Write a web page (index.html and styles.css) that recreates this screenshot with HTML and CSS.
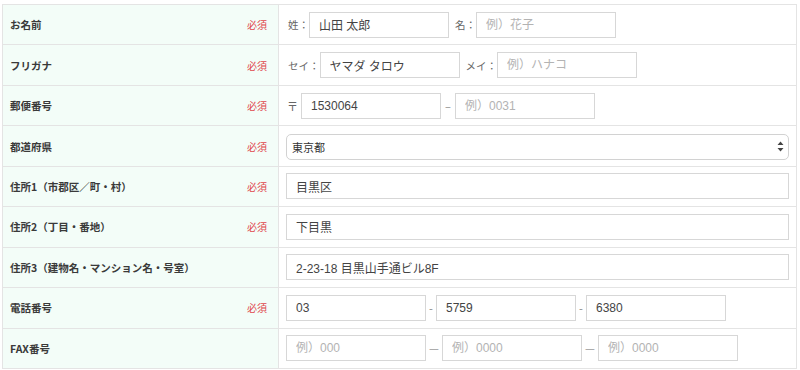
FILE: index.html
```html
<!DOCTYPE html>
<html lang="ja">
<head>
  <meta charset="UTF-8" />
  <title>お客様情報</title>
  <link rel="stylesheet" href="styles.css">
</head>
<body>

  <!-- お客様情報フォーム -->
  <div class="form-table">

    <div class="row">
      <div class="label">お名前<span class="req">必須</span></div>
      <div class="field">
        <span class="pre">姓：</span>
        <input type="text" class="box" value="山田 太郎">
        <span class="pre gap">名：</span>
        <input type="text" class="box" placeholder="例）花子">
      </div>
    </div>

    <div class="row">
      <div class="label">フリガナ<span class="req">必須</span></div>
      <div class="field">
        <span class="pre">セイ：</span>
        <input type="text" class="box" value="ヤマダ タロウ">
        <span class="pre gap">メイ：</span>
        <input type="text" class="box" placeholder="例）ハナコ">
      </div>
    </div>

    <div class="row">
      <div class="label">郵便番号<span class="req">必須</span></div>
      <div class="field">
        <span class="pre zip">〒</span>
        <input type="text" class="box" value="1530064">
        <span class="sep wide">–</span>
        <input type="text" class="box" placeholder="例）0031">
      </div>
    </div>

    <div class="row">
      <div class="label">都道府県<span class="req">必須</span></div>
      <div class="field">
        <div class="select-wrap">
          <select class="select">
            <option>東京都</option>
          </select>
          <svg class="arrows" width="7" height="11" viewBox="0 0 7 11">
            <path d="M3.5 0.5 L6.5 4 L0.5 4 Z M3.5 10.5 L6.5 7 L0.5 7 Z" fill="#444"/>
          </svg>
        </div>
      </div>
    </div>

    <div class="row">
      <div class="label">住所1（市郡区／町・村）<span class="req">必須</span></div>
      <div class="field">
        <input type="text" class="box full" value="目黒区">
      </div>
    </div>

    <div class="row">
      <div class="label">住所2（丁目・番地）<span class="req">必須</span></div>
      <div class="field">
        <input type="text" class="box full" value="下目黒">
      </div>
    </div>

    <div class="row">
      <div class="label">住所3（建物名・マンション名・号室）</div>
      <div class="field">
        <input type="text" class="box full" value="2-23-18 目黒山手通ビル8F">
      </div>
    </div>

    <div class="row">
      <div class="label">電話番号<span class="req">必須</span></div>
      <div class="field">
        <input type="text" class="box" value="03">
        <span class="sep">-</span>
        <input type="text" class="box" value="5759">
        <span class="sep">-</span>
        <input type="text" class="box" value="6380">
      </div>
    </div>

    <div class="row">
      <div class="label">FAX番号</div>
      <div class="field">
        <input type="text" class="box" placeholder="例）000">
        <span class="sep dash">—</span>
        <input type="text" class="box" placeholder="例）0000">
        <span class="sep dash">—</span>
        <input type="text" class="box" placeholder="例）0000">
      </div>
    </div>

  </div>

</body>
</html>
```

FILE: styles.css
```css
body {
  margin: 0;
  padding: 0;
  background: #fff;
  font-family: "Noto Sans CJK JP", "Noto Sans", sans-serif;
  color: #333;
}

.form-table {
  margin: 4px 3px 0 2px;
  border: 1px solid #e4e4e4;
  border-bottom: none;
}

.row {
  display: grid;
  grid-template-columns: 276px 1fr;
  height: 39.44px;
  border-bottom: 1px solid #e4e4e4;
}

.label {
  display: flex;
  align-items: center;
  justify-content: space-between;
  padding: 0 11px 0 7px;
  background: #f3fdf8;
  border-right: 1px solid #e4e4e4;
  font-size: 10.5px;
  font-weight: bold;
  color: #3a3a3a;
}

.req {
  color: #e0474c;
  font-weight: normal;
  font-size: 10px;
}

.field {
  display: flex;
  align-items: center;
  padding: 0 6px 0 7px;
}

.pre {
  font-size: 10.5px;
  color: #666;
  padding-left: 2px;
}

.pre.gap {
  margin-left: 4px;
}

.pre.zip {
  padding-left: 1px;
  margin-right: 3px;
  font-size: 11px;
}

.box {
  box-sizing: border-box;
  width: 140px;
  height: 26px;
  margin: 0;
  padding: 0 9px;
  border: 1px solid #d7d7d7;
  border-radius: 0;
  font-family: "Liberation Sans", "Noto Sans CJK JP", sans-serif;
  font-size: 12px;
  color: #444;
  background: #fff;
  outline: none;
}

.box::placeholder {
  color: #b3b3b3;
}

.box.full {
  width: 503px;
}

.sep {
  display: inline-block;
  width: 10px;
  text-align: center;
  font-size: 11px;
  color: #888;
}

.sep.wide {
  width: 14px;
}

.sep.dash {
  width: 16px;
  color: #999;
}

.select-wrap {
  position: relative;
  width: 503px;
}

.select {
  box-sizing: border-box;
  width: 100%;
  height: 26px;
  margin: 0;
  padding: 0 5px;
  border: 1px solid #d2d2d2;
  border-radius: 5px;
  background: #fff;
  -webkit-appearance: none;
  appearance: none;
  font-family: "Noto Sans CJK JP", sans-serif;
  font-size: 11px;
  color: #333;
  outline: none;
}

.arrows {
  position: absolute;
  right: 5px;
  top: 8px;
}
```
